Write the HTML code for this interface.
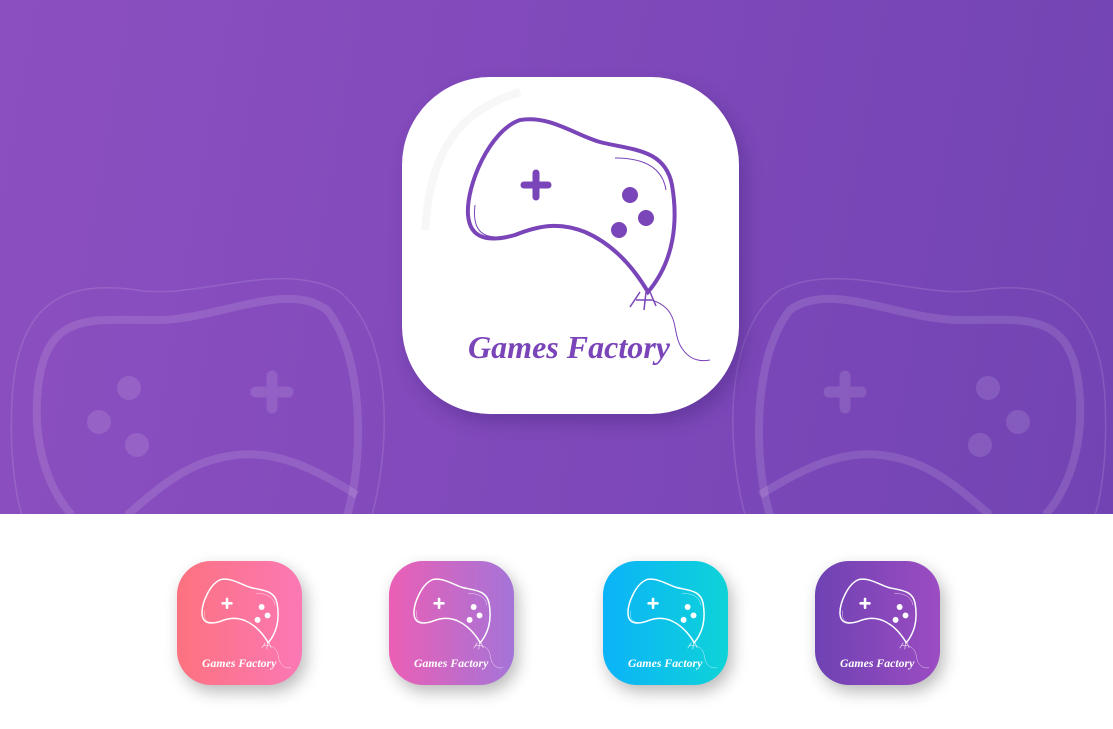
<!DOCTYPE html>
<html><head><meta charset="utf-8"><style>
html,body{margin:0;padding:0;width:1113px;height:729px;overflow:hidden;background:#fff;font-family:"Liberation Sans",sans-serif}
.top{position:absolute;left:0;top:0;width:1113px;height:514px;background:linear-gradient(100deg,#8c4fbf 0%,#8049bb 50%,#7244b3 100%)}
svg{position:absolute;left:0;top:0}
</style></head><body>
<div class="top"></div>
<svg width="1113" height="729" viewBox="0 0 1113 729">
<defs>
<filter id="sh" x="-30%" y="-30%" width="160%" height="160%"><feGaussianBlur stdDeviation="9"/></filter>
<filter id="sh2" x="-40%" y="-40%" width="180%" height="180%"><feGaussianBlur stdDeviation="8"/></filter>
<linearGradient id="g1" x1="0" x2="1"><stop offset="0" stop-color="#fd727f"/><stop offset="1" stop-color="#fb78b5"/></linearGradient>
<linearGradient id="g2" x1="0" x2="1"><stop offset="0" stop-color="#eb5fb5"/><stop offset="1" stop-color="#a474d8"/></linearGradient>
<linearGradient id="g3" x1="0" x2="1"><stop offset="0" stop-color="#0bb3f8"/><stop offset="1" stop-color="#0ed3d8"/></linearGradient>
<linearGradient id="g4" x1="0" x2="1"><stop offset="0" stop-color="#6e42b3"/><stop offset="1" stop-color="#9c4cc2"/></linearGradient>
<g id="pad">
<path d="M120,50 C150,45 175,65 200,72 C230,80 265,78 272,115 C278,150 275,190 248,222 C235,200 215,175 185,162 C160,152 140,155 115,165 C90,172 70,170 68,145 C66,115 90,60 120,50 Z" fill="none" stroke-width="4"/>
<path d="M215,88 C240,88 262,95 266,120" fill="none" stroke-width="1"/>
<path d="M75,135 C72,160 82,168 100,167" fill="none" stroke-width="1"/>
<path d="M136,103 L136,127 M124,115 L148,115" stroke-width="7" stroke-linecap="round" fill="none"/>
<path d="M240,222 L230,237 M246,222 L244,240 M250,222 L256,236 M236,230 L252,230" fill="none" stroke-width="1.5"/>
<path d="M252,230 C280,240 272,260 280,275 C288,290 300,292 310,290" fill="none" stroke-width="1"/>
</g>
</defs>
<g id="ghost" fill="none" stroke="#fff" stroke-opacity="0.12">
<path d="M770,515 C755,470 750,360 790,310 C830,280 900,320 960,320 C1030,320 1075,310 1080,400 C1083,460 1060,500 1045,515" stroke-width="8"/>
<path d="M745,515 C725,440 725,330 780,290 C840,260 920,300 980,290 C1050,280 1100,300 1105,400 C1108,460 1100,500 1095,515" stroke-width="1.5"/>
<path d="M760,495 C800,470 840,450 880,455 C930,460 960,490 990,515" stroke-width="8"/>
<path d="M845,376 L845,408 M829,392 L861,392" stroke-width="11" stroke-linecap="round"/>
<g fill="#fff" fill-opacity="0.12" stroke="none">
<circle cx="988" cy="388" r="12"/><circle cx="1018" cy="422" r="12"/><circle cx="980" cy="445" r="12"/>
</g>
</g>
<use href="#ghost" transform="translate(1117,0) scale(-1,1)"/>
<rect x="408" y="86" width="337" height="337" rx="88" fill="#4a2580" opacity="0.45" filter="url(#sh)"/>
<rect x="402" y="77" width="337" height="337" rx="88" fill="#fff"/>
<path d="M425,230 C430,150 460,110 520,92" fill="none" stroke="#f2f2f2" stroke-width="8" opacity="0.6"/>
<g transform="translate(400,70)" stroke="#7a45b8">
<use href="#pad"/>
<g fill="#7a45b8" stroke="none"><circle cx="230" cy="125" r="8"/><circle cx="246" cy="148" r="8"/><circle cx="219" cy="160" r="8"/></g>
<text x="68" y="288" font-family="Liberation Serif, serif" font-style="italic" font-weight="bold" font-size="32" fill="#7a45b8" stroke="none" textLength="202">Games Factory</text>
</g>
<g>
<rect x="181" y="568" width="125" height="124" rx="34" fill="#555" opacity="0.4" filter="url(#sh2)"/>
<rect x="177" y="561" width="125" height="124" rx="34" fill="url(#g1)"/>
<rect x="393" y="568" width="125" height="124" rx="34" fill="#555" opacity="0.4" filter="url(#sh2)"/>
<rect x="389" y="561" width="125" height="124" rx="34" fill="url(#g2)"/>
<rect x="607" y="568" width="125" height="124" rx="34" fill="#555" opacity="0.4" filter="url(#sh2)"/>
<rect x="603" y="561" width="125" height="124" rx="34" fill="url(#g3)"/>
<rect x="819" y="568" width="125" height="124" rx="34" fill="#555" opacity="0.4" filter="url(#sh2)"/>
<rect x="815" y="561" width="125" height="124" rx="34" fill="url(#g4)"/>
</g>
<g stroke="#fff">
<g transform="translate(177,561) scale(0.368)"><use href="#pad"/><g fill="#fff" stroke="none"><circle cx="230" cy="125" r="8"/><circle cx="246" cy="148" r="8"/><circle cx="219" cy="160" r="8"/></g><text x="68" y="288" font-family="Liberation Serif, serif" font-style="italic" font-weight="bold" font-size="32" fill="#fff" stroke="none" textLength="202">Games Factory</text></g>
<g transform="translate(389,561) scale(0.368)"><use href="#pad"/><g fill="#fff" stroke="none"><circle cx="230" cy="125" r="8"/><circle cx="246" cy="148" r="8"/><circle cx="219" cy="160" r="8"/></g><text x="68" y="288" font-family="Liberation Serif, serif" font-style="italic" font-weight="bold" font-size="32" fill="#fff" stroke="none" textLength="202">Games Factory</text></g>
<g transform="translate(603,561) scale(0.368)"><use href="#pad"/><g fill="#fff" stroke="none"><circle cx="230" cy="125" r="8"/><circle cx="246" cy="148" r="8"/><circle cx="219" cy="160" r="8"/></g><text x="68" y="288" font-family="Liberation Serif, serif" font-style="italic" font-weight="bold" font-size="32" fill="#fff" stroke="none" textLength="202">Games Factory</text></g>
<g transform="translate(815,561) scale(0.368)"><use href="#pad"/><g fill="#fff" stroke="none"><circle cx="230" cy="125" r="8"/><circle cx="246" cy="148" r="8"/><circle cx="219" cy="160" r="8"/></g><text x="68" y="288" font-family="Liberation Serif, serif" font-style="italic" font-weight="bold" font-size="32" fill="#fff" stroke="none" textLength="202">Games Factory</text></g>
</g>
</svg>
</body></html>
